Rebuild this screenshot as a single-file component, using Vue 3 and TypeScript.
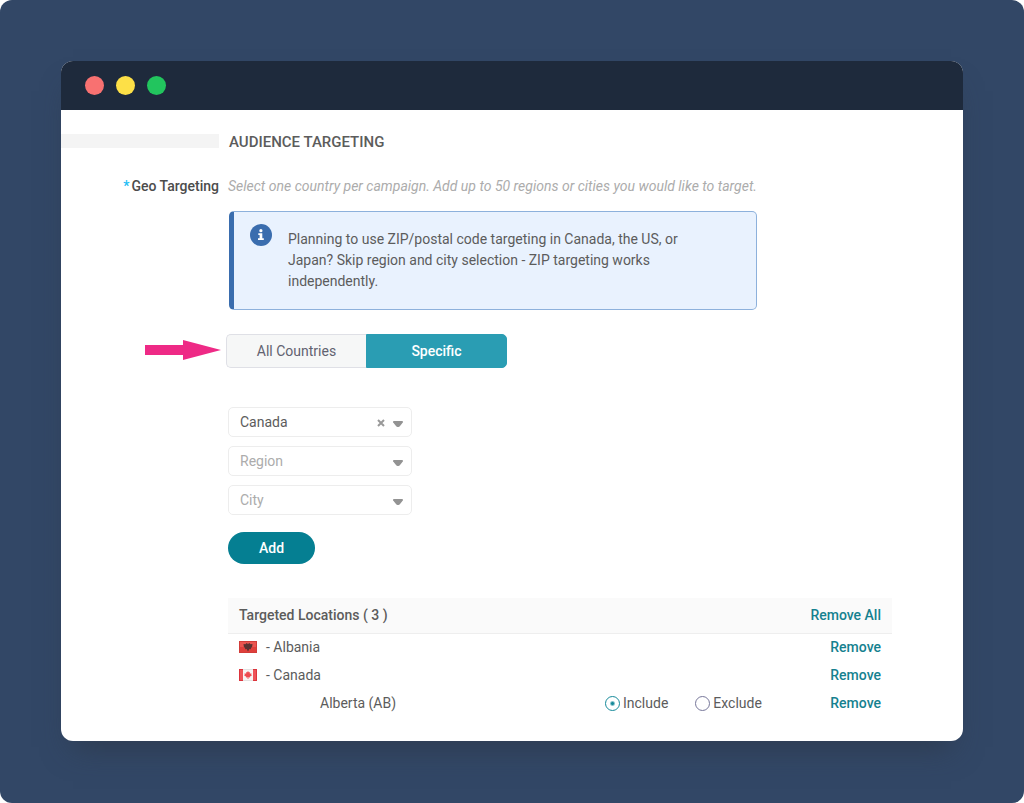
<script setup lang="ts">
import { computed, ref } from 'vue'

interface Place {
  id: number
  name: string
  flag?: 'al' | 'ca'
  mode?: 'include' | 'exclude'
}

const scope = ref<'all' | 'specific'>('specific')
const country = ref('Canada')
const region = ref('')
const city = ref('')

const places = ref<Place[]>([
  { id: 1, name: 'Albania', flag: 'al' },
  { id: 2, name: 'Canada', flag: 'ca' },
  { id: 3, name: 'Alberta (AB)', mode: 'include' },
])
const count = computed(() => places.value.length)

function remove(id: number) {
  places.value = places.value.filter((p) => p.id !== id)
}
function add() {
  const name = city.value || region.value || country.value
  if (name) places.value.push({ id: Date.now(), name, mode: 'include' })
}
</script>

<template>
  <div class="page">
    <main class="window">
      <header class="titlebar">
        <span class="dot red"></span>
        <span class="dot yellow"></span>
        <span class="dot green"></span>
      </header>

      <form class="form" @submit.prevent="add">
        <span class="rule"></span>
        <h1 class="title">AUDIENCE TARGETING</h1>

        <span id="geo-label" class="label"><span class="star">*</span>Geo Targeting</span>
        <p class="hint">Select one country per campaign. Add up to 50 regions or cities you would like to target.</p>

        <aside class="notice">
          <svg class="info" viewBox="0 0 22 22" aria-hidden="true">
            <circle cx="11" cy="11" r="11" fill="#3a6dae" />
            <circle cx="10.9" cy="6.7" r="1.6" fill="#fff" />
            <path d="M8.3 9.2h4v5h1.5v1.9H8v-1.9h1.6v-3.1H8.3z" fill="#fff" />
          </svg>
          <p class="notice-text">
            Planning to use ZIP/postal code targeting in Canada, the US, or Japan? Skip region and city selection - ZIP
            targeting works independently.
          </p>
        </aside>

        <svg class="arrow" viewBox="0 0 76 20" aria-hidden="true">
          <path d="M0 5h38V0l38 10-38 10v-5H0z" fill="#ee2a86" />
        </svg>
        <div class="segments" role="group" aria-labelledby="geo-label">
          <button type="button" class="segment" :class="{ active: scope === 'all' }" @click="scope = 'all'">
            All Countries
          </button>
          <button type="button" class="segment" :class="{ active: scope === 'specific' }" @click="scope = 'specific'">
            Specific
          </button>
        </div>

        <div class="fields">
          <div class="field">
            <select v-model="country" class="select" aria-label="Country">
              <option value=""></option>
              <option>Albania</option>
              <option>Canada</option>
            </select>
            <button v-if="country" type="button" class="clear" aria-label="Clear country" @click="country = ''">
              <svg viewBox="0 0 8 8" width="8" height="8"><path d="M1 1l6 6M7 1L1 7" stroke="#999" stroke-width="2" /></svg>
            </button>
            <svg class="caret" viewBox="0 0 12 8" aria-hidden="true"><path d="M1.800 1h8.400q1.300.2.600 1.500L7.800 6.300q-.6.7-1.300.7h-1q-.7 0-1.300-.7L1.200 2.500Q.5 1.200 1.800 1z" fill="#939393" /></svg>
          </div>
          <div class="field">
            <select v-model="region" class="select" :class="{ empty: !region }" aria-label="Region">
              <option value="">Region</option>
              <option>Alberta (AB)</option>
            </select>
            <svg class="caret" viewBox="0 0 12 8" aria-hidden="true"><path d="M1.800 1h8.400q1.300.2.600 1.500L7.800 6.300q-.6.7-1.300.7h-1q-.7 0-1.300-.7L1.200 2.500Q.5 1.200 1.800 1z" fill="#939393" /></svg>
          </div>
          <div class="field">
            <select v-model="city" class="select" :class="{ empty: !city }" aria-label="City">
              <option value="">City</option>
              <option>Calgary</option>
            </select>
            <svg class="caret" viewBox="0 0 12 8" aria-hidden="true"><path d="M1.800 1h8.400q1.300.2.600 1.500L7.800 6.300q-.6.7-1.300.7h-1q-.7 0-1.300-.7L1.200 2.500Q.5 1.200 1.800 1z" fill="#939393" /></svg>
          </div>
          <button type="submit" class="add">Add</button>
        </div>

        <table class="places">
          <thead>
            <tr>
              <th scope="col">Targeted Locations ( {{ count }} )</th>
              <th class="mode-col"></th>
              <th class="action-col"><button type="button" class="link" @click="places = []">Remove All</button></th>
            </tr>
          </thead>
          <tbody>
            <tr v-for="p in places" :key="p.id">
              <td>
                <span v-if="p.flag" class="place">
                  <svg v-if="p.flag === 'al'" class="flag" viewBox="0 0 18 12" aria-hidden="true">
                    <rect width="18" height="12" fill="#d23c39" />
                    <rect x="1" y="1" width="16" height="10" fill="#ea5550" />
                    <rect x="1" y="6" width="16" height="5" fill="#df3f3b" />
                    <path d="M4.500 3l2 .3L7.500 2 9 3l1.500-1 1 1.300 2-.3-.4 3-1.300 1 .3 1.300-1.700-.2L9 10.500 7.600 8.100l-1.700.2.300-1.300-1.300-1z" fill="#5a3232" />
                  </svg>
                  <svg v-else class="flag" viewBox="0 0 18 12" aria-hidden="true">
                    <rect width="18" height="12" fill="#e4e2e2" />
                    <rect x="4" y="1" width="10" height="10" fill="#f7f4f4" />
                    <path d="M0 0h4v12H0zM14 0h4v12h-4z" fill="#dc343c" />
                    <path d="M1 1h3v10H1zM14 1h3v10h-3z" fill="#ee5358" />
                    <path d="M9 2l1 1.400 1-.3-.2 1.600 1.700-.4-.3 1.300.8.600-2.200 1.500.2.800-1.600-.2V10h-.8V8.300L7 8.500l.2-.8L5 6.200l.8-.6-.3-1.300 1.700.4L7 3.100l1 .3z" fill="#ee4a50" />
                  </svg>
                  <span>- {{ p.name }}</span>
                </span>
                <span v-else class="child">{{ p.name }}</span>
              </td>
              <td>
                <span v-if="p.mode" class="modes">
                  <label class="mode"><input v-model="p.mode" type="radio" class="radio" :name="'mode-' + p.id" value="include" />Include</label>
                  <label class="mode"><input v-model="p.mode" type="radio" class="radio" :name="'mode-' + p.id" value="exclude" />Exclude</label>
                </span>
              </td>
              <td class="action-col"><button type="button" class="link" @click="remove(p.id)">Remove</button></td>
            </tr>
          </tbody>
        </table>
      </form>
    </main>
  </div>
</template>

<style>
body {
  background: #fff;
}
</style>

<style scoped>
* {
  box-sizing: border-box;
}
.page {
  min-height: 100vh;
  padding: 61px;
  border-radius: 12px;
  background: #324766;
  font-family: Roboto, 'Liberation Sans', sans-serif;
  font-size: 14px;
  line-height: 21px;
  color: #5c5c5c;
}
button,
select {
  font: inherit;
  cursor: pointer;
}
.window {
  border-radius: 12px;
  background: #fff;
  overflow: hidden;
  box-shadow: 0 18px 28px -12px rgba(44, 54, 70, 0.7);
}
.titlebar {
  display: flex;
  align-items: center;
  gap: 12px;
  height: 49px;
  padding: 0 24px;
  background: #1e2a3c;
}
.dot {
  width: 19px;
  height: 19px;
  border-radius: 50%;
}
.red {
  background: #f87171;
}
.yellow {
  background: #fde047;
}
.green {
  background: #22c55e;
}
.form {
  display: grid;
  grid-template-columns: 158px minmax(0, 1fr);
  column-gap: 9px;
  padding: 22px 71px 24px 0;
}
.rule {
  height: 14px;
  margin-top: 2px;
  background: #f4f4f4;
}
.title {
  margin: 0 0 0 1px;
  font-size: 15px;
  font-weight: 500;
  line-height: 21px;
}
.label {
  margin-top: 23px;
  text-align: right;
  font-weight: 500;
  color: #4c4c4c;
}
.star {
  margin-right: 2px;
  color: #22bdf5;
}
.hint {
  margin: 23px 0 0;
  font-style: italic;
  color: #acacac;
}
.notice {
  grid-column: 2;
  display: flex;
  gap: 16px;
  max-width: 528px;
  margin: 14px 0 0 1px;
  padding: 12px 64px 17px 16px;
  border: 1px solid #8db1dc;
  border-left: 5px solid #3a6dae;
  border-radius: 5px;
  background: #e9f2fe;
}
.info {
  flex: none;
  width: 22px;
  height: 22px;
}
.notice-text {
  margin: 5px 0 0;
}
.arrow {
  justify-self: end;
  align-self: center;
  width: 76px;
  height: 20px;
  margin: 22px -2px 0 0;
}
.segments {
  display: flex;
  width: 281px;
  margin: 24px 0 0 -2px;
}
.segment {
  flex: 1;
  height: 34px;
  padding: 0;
  border: 1px solid #dfe0e6;
  background: #f6f7f7;
  color: #626270;
}
.segment:first-child {
  border-right-width: 0;
  border-radius: 5px 0 0 5px;
}
.segment:last-child {
  border-radius: 0 5px 5px 0;
}
.segment.active {
  border-color: #2a9db3;
  background: #2a9db3;
  color: #fff;
  font-weight: 500;
}
.fields {
  grid-column: 2;
  display: flex;
  flex-direction: column;
  gap: 9px;
  width: 184px;
  margin-top: 39px;
}
.field {
  position: relative;
}
.select {
  display: block;
  width: 100%;
  height: 30px;
  padding: 1px 44px 0 11px;
  appearance: none;
  border: 1px solid #ededed;
  border-radius: 5px;
  background: #fff;
  color: #5c5c5c;
}
.select.empty {
  color: #acacac;
}
.caret {
  position: absolute;
  right: 8px;
  top: 13px;
  width: 12px;
  height: 8px;
  pointer-events: none;
}
.clear {
  position: absolute;
  right: 27px;
  top: 12px;
  display: flex;
  padding: 0;
  border: 0;
  background: none;
}
.add {
  width: 87px;
  height: 32px;
  margin-top: 8px;
  border: 0;
  border-radius: 16px;
  background: #057f92;
  color: #fff;
  font-weight: 500;
}
.places {
  grid-column: 2;
  width: 100%;
  margin-top: 34px;
  table-layout: fixed;
  border-collapse: collapse;
}
th,
td {
  height: 28px;
  padding: 0;
  text-align: left;
}
th {
  height: 35px;
  border-bottom: 1px solid #eee;
  background: #fafafa;
  font-weight: 500;
}
th:first-child,
td:first-child {
  padding-left: 11px;
}
.mode-col {
  width: 190px;
}
th.action-col,
td.action-col {
  width: 97px;
  padding-right: 11px;
  text-align: right;
}
.link {
  padding: 0;
  border: 0;
  background: none;
  color: #15818f;
  font-weight: 500;
  white-space: nowrap;
}
.place {
  display: flex;
  align-items: center;
  gap: 9px;
}
.flag {
  width: 18px;
  height: 12px;
}
.child {
  padding-left: 81px;
}
.modes {
  display: flex;
  gap: 27px;
}
.mode {
  display: flex;
  align-items: center;
  gap: 3px;
}
.radio {
  width: 15px;
  height: 15px;
  margin: 0;
  appearance: none;
  border: 1px solid #77779a;
  border-radius: 50%;
  background: #fff;
}
.radio:checked {
  border-color: #168a9a;
  background: radial-gradient(circle, #168a9a 1px, #fff 3px);
}
</style>
